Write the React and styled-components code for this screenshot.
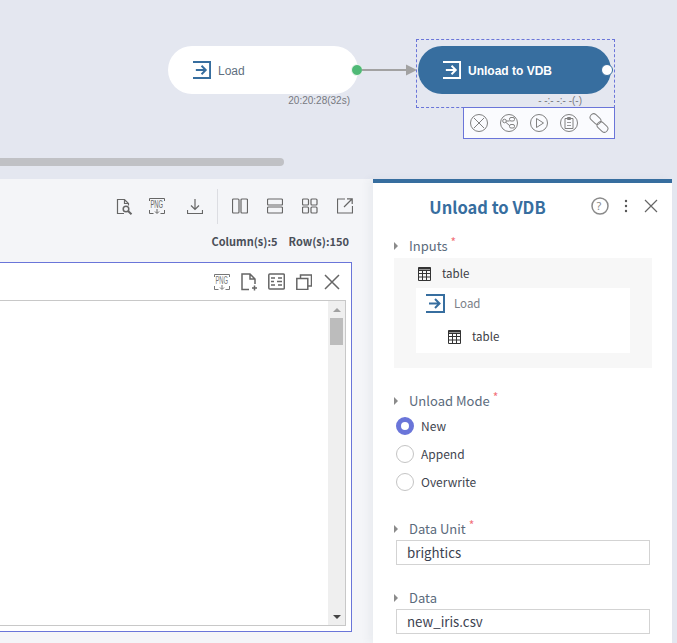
import React from 'react';
import styled, { createGlobalStyle } from 'styled-components';

const blue = '#376e9f';
const select = '#6a75d9';
const cjk = '"Noto Sans CJK KR", "Noto Sans", sans-serif';

const Global = createGlobalStyle`
  html, body { margin: 0; padding: 0; background: #e4e7f0; }
  * { box-sizing: border-box; }
`;

const Page = styled.div`
  width: 677px;
  height: 643px;
  overflow: hidden;
  display: flex;
  flex-direction: column;
  background: #e4e7f0;
  font-family: ${cjk};
`;

/* canvas - nodes sit at free positions */
const Canvas = styled.div`
  position: relative;
  height: 179px;
  flex: none;
`;

const Node = styled.div`
  position: absolute;
  left: ${(p) => p.$x}px;
  top: 46px;
  width: ${(p) => p.$w}px;
  height: 48px;
  border-radius: 24px;
  display: flex;
  align-items: center;
  gap: 7px;
  padding-left: 25px;
  font-family: "Liberation Sans", Arial, sans-serif;
  font-size: 12px;
  background: ${(p) => (p.$active ? blue : '#fff')};
  color: ${(p) => (p.$active ? '#fff' : '#5f6f80')};
  font-weight: ${(p) => (p.$active ? 700 : 400)};
`;

const NodeName = styled.span`
  padding-top: 1px;
`;

const Port = styled.span`
  position: absolute;
  left: ${(p) => p.$x}px;
  top: 64px;
  width: 12px;
  height: 12px;
  border-radius: 50%;
  background: ${(p) => p.$color};
  border: ${(p) => p.$border};
`;

const Time = styled.span`
  position: absolute;
  top: ${(p) => p.$y}px;
  right: ${(p) => p.$r}px;
  font-family: "Liberation Sans", Arial, sans-serif;
  font-size: 10px;
  line-height: 12px;
  color: #77797f;
  white-space: nowrap;
`;

const Link = styled.svg`
  position: absolute;
  left: 362px;
  top: 63px;
`;

const Selection = styled.div`
  position: absolute;
  left: 416px;
  top: 39px;
  width: 199px;
  height: 69px;
  border: 1px dashed ${select};
`;

const NodeTools = styled.div`
  position: absolute;
  left: 463px;
  top: 107px;
  width: 152px;
  height: 32px;
  padding-left: 5px;
  display: flex;
  align-items: center;
  gap: 10px;
  background: #fafbfe;
  border: 1px solid ${select};
`;

const HScroll = styled.div`
  position: absolute;
  left: 0;
  top: 158px;
  width: 284px;
  height: 8px;
  border-radius: 0 4px 4px 0;
  background: #c0c1c5;
`;

const Lower = styled.div`
  flex: 1;
  display: flex;
  min-height: 0;
`;

const Left = styled.section`
  width: 373px;
  flex: none;
  background: #f4f5f8;
  padding-right: 21px;
`;

const Toolbar = styled.div`
  height: 54px;
  margin-right: -1px;
  display: flex;
  align-items: center;
  justify-content: flex-end;
`;

const ToolGroup = styled.div`
  display: flex;
  align-items: center;
  gap: ${(p) => p.$gap}px;
`;

const Spaced = styled.span`
  display: flex;
  margin-left: 6px;
`;

const Divider = styled.span`
  width: 1px;
  height: 35px;
  margin: 0 14px 0 14px;
  background: #dcdde2;
`;

const Counts = styled.div`
  display: flex;
  justify-content: flex-end;
  gap: 11px;
  height: 29px;
  padding-right: 3px;
  font-size: 11px;
  line-height: 16px;
  font-weight: 700;
  color: #4a4f59;
`;

const ChartBox = styled.div`
  height: 370px;
  margin-left: -1px;
  background: #fff;
  border: 1px solid ${select};
  display: flex;
  flex-direction: column;
  padding-bottom: 5px;
  padding-right: 5px;
`;

const BoxHead = styled.div`
  height: 37px;
  flex: none;
  display: flex;
  align-items: center;
  justify-content: flex-end;
  gap: 11px;
  padding-right: 5px;
`;

const Sheet = styled.div`
  flex: 1;
  border: 1px solid #c8c8c8;
  border-left: 0;
  background: #fff;
  display: flex;
  justify-content: flex-end;
`;

const VScroll = styled.div`
  width: 17px;
  background: #efefef;
  display: flex;
  flex-direction: column;
  align-items: center;
  justify-content: space-between;
  padding-top: 7px;
  padding-bottom: 6px;
`;

const ScrollTop = styled.div`
  display: flex;
  flex-direction: column;
  align-items: center;
`;

const Thumb = styled.div`
  width: 13px;
  height: 27px;
  margin-top: 6px;
  background: #bcbcbc;
`;

const Arrow = styled.span`
  width: 0;
  height: 0;
  border-left: 4px solid transparent;
  border-right: 4px solid transparent;
  border-bottom: ${(p) => (p.$up ? '4px solid #a0a0a0' : '0')};
  border-top: ${(p) => (p.$up ? '0' : '4px solid #444')};
`;

const Panel = styled.aside`
  width: 299px;
  flex: none;
  background: #fff;
  border-top: 4px solid ${blue};
  padding: 0 21px;
  box-shadow: -5px 0 8px rgba(60, 70, 90, 0.05);
`;

const PanelHead = styled.header`
  position: relative;
  height: 50px;
  display: flex;
  align-items: center;
  justify-content: center;
  margin: 0 -21px;
`;

const PanelTitle = styled.h2`
  margin: -2px 0 0 -70px;
  font-size: 16.5px;
  line-height: 20px;
  font-weight: 700;
  color: ${blue};
`;

const PanelActions = styled.div`
  position: absolute;
  right: 13px;
  top: 14px;
  display: flex;
  align-items: center;
  gap: 13px;
`;

const Label = styled.div`
  display: flex;
  align-items: center;
  height: 20px;
  padding-bottom: 2px;
  margin-top: ${(p) => p.$top}px;
  font-size: 13px;
  color: #5b6b7c;
  &::before {
    content: '';
    border-left: 4px solid #8b8b8b;
    border-top: 4px solid transparent;
    border-bottom: 4px solid transparent;
    margin: 2px 11px 0 0;
  }
`;

const Star = styled.span`
  color: #f2717a;
  font-size: 12px;
  line-height: 12px;
  margin: -6px 0 0 3px;
`;

const InputsBox = styled.div`
  margin-top: 2px;
  height: 110px;
  width: 258px;
  background: #f7f7f7;
  padding-left: 22px;
`;

const PortRow = styled.div`
  height: 30px;
  display: flex;
  align-items: center;
  gap: 11px;
  font-size: 11.5px;
  color: #3c3c44;
  padding-left: 2px;
`;

const SourceBox = styled.div`
  width: 214px;
  height: 65px;
  background: #fff;
  display: flex;
  flex-direction: column;
`;

const SourceHead = styled.div`
  height: 30px;
  display: flex;
  align-items: center;
  gap: 9px;
  padding-left: 10px;
  font-size: 11.5px;
  color: #7a7f88;
`;

const SourcePort = styled(PortRow)`
  height: 35px;
  padding-left: 32px;
`;

const Radios = styled.div`
  display: flex;
  flex-direction: column;
  margin-top: 1px;
  margin-left: 2px;
`;

const Radio = styled.label`
  height: 28px;
  padding-bottom: 2px;
  display: flex;
  align-items: center;
  gap: 7px;
  font-size: 12px;
  color: #3f4550;
`;

const Dot = styled.span`
  width: 18px;
  height: 18px;
  margin-top: 2px;
  border-radius: 50%;
  background: #fff;
  border: ${(p) => (p.$on ? `5px solid ${select}` : '1px solid #c4c4c4')};
`;

const Field = styled.div`
  width: 254px;
  height: 25px;
  margin: 1px 0 0 2px;
  border: 1px solid #d3d3d3;
  padding-left: 10px;
  font-size: 13.3px;
  line-height: 23px;
  color: #3c4250;
`;

const GridSvg = styled.svg`
  margin-top: 2px;
`;

const LoadIcon = ({ color = blue, size = 18 }) => (
  <svg width={size} height={size} viewBox="0 0 19 19" fill="none" stroke={color} strokeWidth="2">
    <path d="M0 1h18v17H0" />
    <path d="M3 9.500h10.500M9 5l4.500 4.500L9 14" />
  </svg>
);

const GridIcon = () => (
  <GridSvg width="13" height="14" viewBox="0 0 13 14" fill="none" stroke="#333" strokeWidth="1">
    <path d="M.5.500h12v13H.500z" />
    <path d="M.5 3.500h12M.5 6.500h12M.5 10h12M4.500 3.500v10M8.500 3.500v10" />
    <path d="M.5 1.500h12" strokeWidth="2" />
  </GridSvg>
);

const ToolIcon = ({ w = 18, h = 18, children, color = '#666', sw = 1.2 }) => (
  <svg width={w} height={h} viewBox={`0 0 ${w} ${h}`} fill="none" stroke={color} strokeWidth={sw}>
    {children}
  </svg>
);

const PngIcon = ({ color = '#666' }) => (
  <ToolIcon w={16} h={16} color={color} sw={1}>
    <path d="M.5 3V.5h15V3M.5 12v3.500h4M11.500 15.500h4V12" />
    <text transform="translate(1.500 10) scale(0.58 1)" fontFamily="Liberation Sans, sans-serif" fontSize="10" stroke="none" fill={color}>PNG</text>
    <path d="M8 11v4M6 13.500l2 2 2-2" />
  </ToolIcon>
);

const Circle = ({ children }) => (
  <ToolIcon w={20} h={20} color="#808080" sw={1}>
    <circle cx="10" cy="10" r="8.500" />
    {children}
  </ToolIcon>
);

export default function App() {
  return (
    <Page>
      <Global />
      <Canvas>
        <Node $x={168} $w={190}>
          <LoadIcon />
          <NodeName>Load</NodeName>
        </Node>
        <Port $x={351} $color="#4fb976" $border="1px solid #f2f8f4" />
        <Time $y={95} $r={327}>20:20:28(32s)</Time>
        <Link width="56" height="14" viewBox="0 0 56 14">
          <path d="M0 7h46" stroke="#a2a2a2" strokeWidth="2" />
          <path d="M44 1.500 55 7l-11 5.500z" fill="#a2a2a2" />
        </Link>
        <Node $x={418} $w={193} $active>
          <LoadIcon color="#fff" />
          <NodeName>Unload to VDB</NodeName>
        </Node>
        <Port $x={601} $color="#fff" $border={`1.5px solid ${blue}`} />
        <Selection />
        <Time $y={95} $r={95}>- -:- -:- -(-)</Time>
        <NodeTools>
          <Circle><path d="M5 5l10 10M15 5 5 15" /></Circle>
          <Circle>
            <circle cx="5.500" cy="8" r="1.800" /><rect x="10.500" y="4.500" width="5" height="3.500" rx="1.500" /><rect x="10.500" y="11.500" width="5" height="3.500" rx="1.500" />
            <path d="M7.300 8h3.200M7 9.500l3.500 3" />
          </Circle>
          <Circle><path d="M7.500 5.500v9l7-4.500z" /></Circle>
          <Circle>
            <path d="M6 5.500h8v10H6zM8.500 4.500h3v2h-3z" />
            <path d="M8 9.500h4M8 12.500h4" strokeWidth=".8" />
          </Circle>
          <ToolIcon w={20} h={20} color="#808080" sw={1}>
            <rect x="-6" y="-3.500" width="12" height="7" rx="3.500" transform="translate(6.500 6) rotate(42)" />
            <rect x="-6" y="-3.500" width="12" height="7" rx="3.500" transform="translate(13.500 14) rotate(42)" />
          </ToolIcon>
        </NodeTools>
        <HScroll />
      </Canvas>
      <Lower>
        <Left>
          <Toolbar>
            <ToolGroup $gap={16}>
              <ToolIcon w={17} h={17}>
                <path d="M8 15.500H1.500V1.500h7l4 4v2M8.500 1.500v4h4" />
                <circle cx="10" cy="11" r="2.800" strokeWidth="1.500" /><path d="M12 13l3.500 3.200" strokeWidth="2" />
              </ToolIcon>
              <PngIcon />
              <Spaced>
                <ToolIcon w={16} h={16}>
                  <path d="M8 1v10M4 7.500l4 4 4-4M.5 12v3.500h15V12" />
                </ToolIcon>
              </Spaced>
            </ToolGroup>
            <Divider />
            <ToolGroup $gap={19}>
              <ToolIcon w={16} h={16}><rect x=".5" y="1" width="6.500" height="14" rx="1" /><rect x="9" y="1" width="6.500" height="14" rx="1" /></ToolIcon>
              <ToolIcon w={16} h={16}><rect x=".5" y="1" width="15" height="6" rx="1" /><rect x=".5" y="9" width="15" height="6" rx="1" /></ToolIcon>
              <ToolIcon w={16} h={16}><rect x=".5" y="1" width="6" height="6" rx="1" /><rect x="9" y="1" width="6" height="6" rx="1" /><rect x=".5" y="9" width="6" height="6" rx="1" /><rect x="9" y="9" width="6" height="6" rx="1" /></ToolIcon>
              <ToolIcon w={16} h={16}><path d="M8 1H.5v14h15V8M10 .8h5.200V6M15 1 7 9" /></ToolIcon>
            </ToolGroup>
          </Toolbar>
          <Counts>
            <span>Column(s):5</span>
            <span>Row(s):150</span>
          </Counts>
          <ChartBox>
            <BoxHead>
              <PngIcon color="#777" />
              <ToolIcon w={16} h={18} color="#666" sw={1.500}>
                <path d="M8 16.500H1V1h8l5 5v5M9 1v5h5M11 15h5M13.500 12.500v5" />
              </ToolIcon>
              <ToolIcon w={17} h={17} color="#666" sw={1.500}>
                <rect x=".8" y="1" width="15.500" height="15" rx="1" />
                <path d="M3 5h4M10 5h4M3 8.500h3M9 8.500h5M3 12h4M10 12h4" />
              </ToolIcon>
              <ToolIcon w={16} h={16} color="#666" sw={1.500}>
                <path d="M4.500 4V1h11v11h-3M.8 4.500h11v11H.800z" />
              </ToolIcon>
              <ToolIcon w={18} h={16} color="#666" sw={1.500}>
                <path d="M2 1l14 14M16 1 2 15" />
              </ToolIcon>
            </BoxHead>
            <Sheet>
              <VScroll>
                <ScrollTop>
                  <Arrow $up />
                  <Thumb />
                </ScrollTop>
                <Arrow />
              </VScroll>
            </Sheet>
          </ChartBox>
        </Left>
        <Panel>
          <PanelHead>
            <PanelTitle>Unload to VDB</PanelTitle>
            <PanelActions>
              <ToolIcon w={18} h={18} color="#8a8a8a" sw={1.500}>
                <circle cx="9" cy="9" r="8" />
                <text x="5.500" y="13" fontSize="11" fontFamily="Noto Sans, sans-serif" stroke="none" fill="#8a8a8a">?</text>
              </ToolIcon>
              <ToolIcon w={8} h={14} color="#555" sw={0}>
                <circle cx="4" cy="2" r="1.200" fill="#555" /><circle cx="4" cy="7" r="1.200" fill="#555" /><circle cx="4" cy="12" r="1.200" fill="#555" />
              </ToolIcon>
              <ToolIcon w={16} h={16} color="#666" sw={1.200}>
                <path d="M2 2l12 12M14 2 2 14" />
              </ToolIcon>
            </PanelActions>
          </PanelHead>
          <Label $top={3}>Inputs<Star>*</Star></Label>
          <InputsBox>
            <PortRow><GridIcon />table</PortRow>
            <SourceBox>
              <SourceHead><LoadIcon size={19} />Load</SourceHead>
              <SourcePort><GridIcon />table</SourcePort>
            </SourceBox>
          </InputsBox>
          <Label $top={23}>Unload Mode<Star>*</Star></Label>
          <Radios>
            <Radio><Dot $on />New</Radio>
            <Radio><Dot />Append</Radio>
            <Radio><Dot />Overwrite</Radio>
          </Radios>
          <Label $top={23}>Data Unit<Star>*</Star></Label>
          <Field>brightics</Field>
          <Label $top={23}>Data</Label>
          <Field>new_iris.csv</Field>
        </Panel>
      </Lower>
    </Page>
  );
}
